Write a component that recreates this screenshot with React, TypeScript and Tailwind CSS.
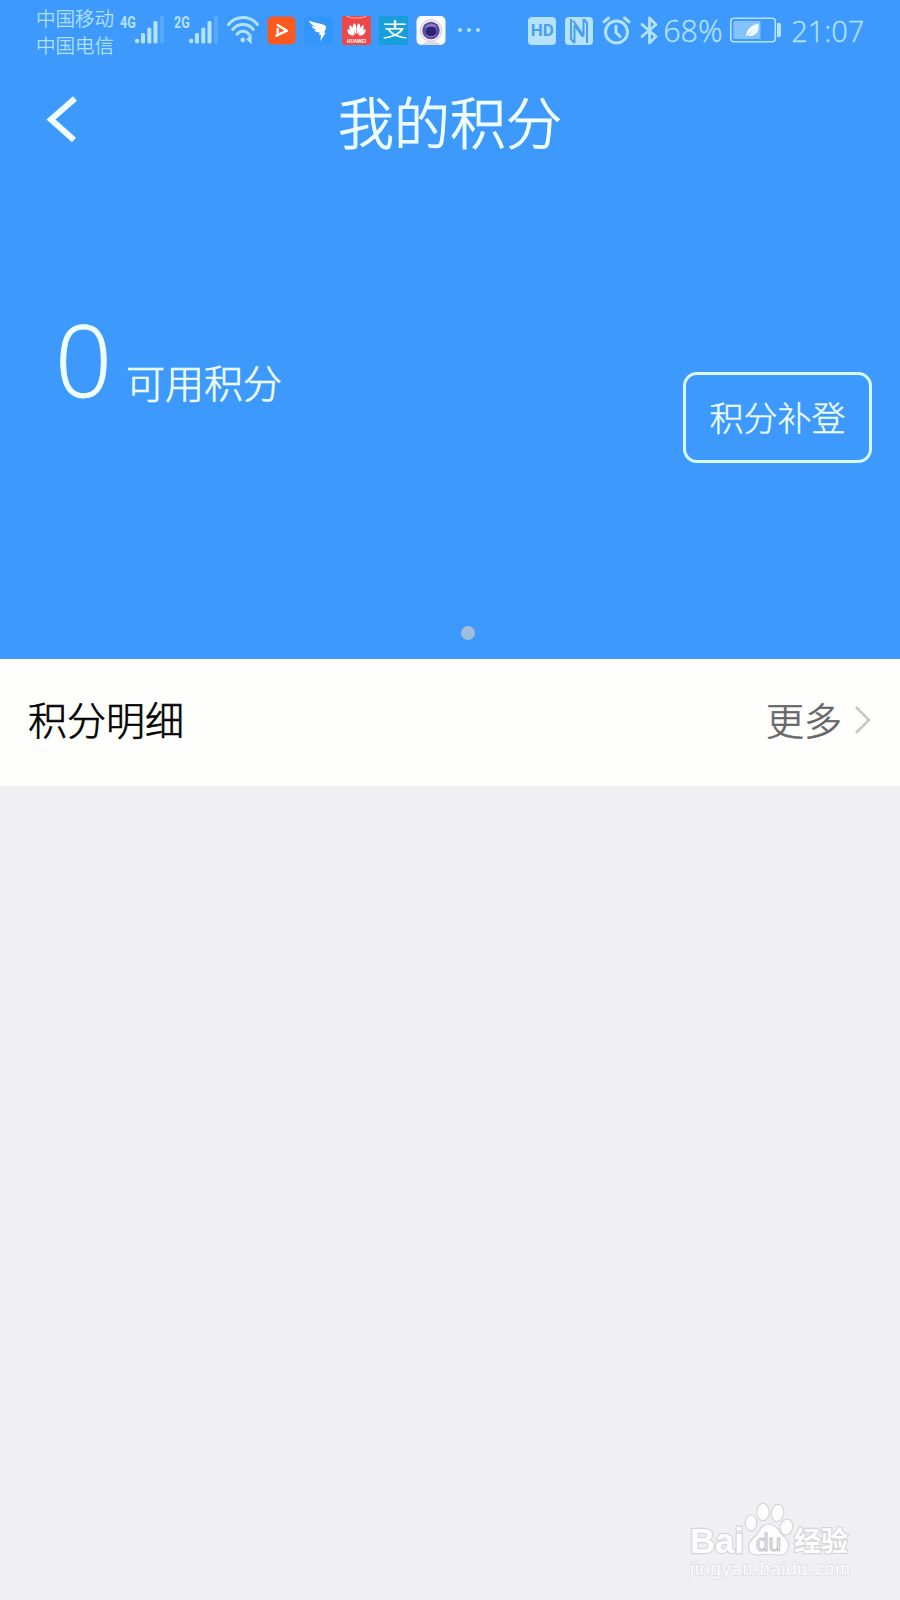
const statusTint = "#b5e2fd";

function SignalBars() {
  return (
    <svg width="30" height="30" viewBox="0 0 30 30" fill={statusTint}>
      <circle cx="2.2" cy="26" r="2.3" />
      <rect x="6" y="18" width="4" height="10.5" rx="1.5" />
      <rect x="12.3" y="12.5" width="4" height="16" rx="1.5" />
      <rect x="18.5" y="6" width="4" height="22.5" rx="1.5" />
      <rect x="25" y="0.5" width="4" height="28" rx="1.5" opacity="0.22" />
    </svg>
  );
}

function Network({ label }: { label: string }) {
  return (
    <div className="flex h-[30px] w-[45px] shrink-0 items-start">
      <span className="w-[15px] origin-left scale-x-[0.74] font-['Roboto'] text-[17px] leading-[15px] font-bold text-[#b5e2fd]">
        {label}
      </span>
      <div className="shrink-0">
        <SignalBars />
      </div>
    </div>
  );
}

function WifiIcon() {
  return (
    <svg width="34" height="30" viewBox="0 0 34 30" fill="none" stroke={statusTint} strokeWidth="2.9" strokeLinecap="round">
      <path d="M2.5 9.5C10 .2 24 .2 31.5 9.5" />
      <path d="M6.7 14.5c5.5-6.6 15.1-6.6 20.6 0" />
      <path d="M11 19.2c3.5-3.9 8.5-3.9 12 0" />
      <circle cx="16.8" cy="25" r="2.4" fill={statusTint} stroke="none" />
      <path d="M21 24.3l4-4.3v8z" fill={statusTint} strokeWidth="1.2" />
    </svg>
  );
}

function AppIcons() {
  return (
    <div className="flex items-center gap-[8.3px] pt-px">
      <svg width="29" height="29" viewBox="0 0 29 29">
        <rect x="0.5" y="0.5" width="28" height="28" rx="5" fill="#fa5a1e" />
        <path d="M10.5 9l9.5 5.7-10.5 5M10.7 13v6" fill="none" stroke="#fff" strokeWidth="2.4" strokeLinejoin="round" strokeLinecap="round" />
      </svg>
      <svg width="29" height="29" viewBox="0 0 29 29">
        <rect width="29" height="29" rx="5" fill="#3296fa" />
        <path d="M5 4.5c4 2 9 2.7 14 4 3 .9 3.500 2.400 2.800 4.300l-1.800 4h1.800l-5.500 8.200 .7-6h-2l.8-2.500c-2.800 .2-4.600-.9-5.700-2.500l3 .2c-2.700-1-4.700-2.300-5.500-4.500l5 1c-3.600-1.300-6.900-2.800-7.600-6.200z" fill="#fff" />
      </svg>
      <svg width="29" height="29" viewBox="0 0 29 29">
        <rect width="29" height="29" rx="2" fill="#eb4949" />
        <path d="M4.5 0c4 2.7 16 2.7 20 0" fill="none" stroke="#f9b3ac" strokeWidth="1" />
        <g fill="#fff">
          <path d="M14 18.5C10.5 13.500 9.500 9 12.600 7.300c2 2 2 7 1.400 11.200z" />
          <path d="M15 18.5c3.500-5 4.500-9.500 1.400-11.200-2 2-2 7-1.400 11.200z" />
          <path d="M12.8 18.8C8.500 16 6.200 12.500 7.800 9c3.200 1.700 4.700 5.800 5 9.800zM16.200 18.800c4.300-2.800 6.600-6.300 5-9.800-3.200 1.700-4.700 5.800-5 9.800z" />
          <path d="M12.2 19.5c-4.500 .6-7.200-2.500-6.700-6.500 3.200 .8 5.400 3.500 6.700 6.500zM16.800 19.500c4.500 .6 7.200-2.500 6.700-6.500-3.200 .8-5.400 3.500-6.700 6.500z" />
        </g>
        <text x="14.5" y="26.6" textAnchor="middle" textLength="19" lengthAdjust="spacingAndGlyphs" fontSize="6" fontWeight="700" fontFamily="Liberation Sans, sans-serif" fill="#fff">
          HUAWEI
        </text>
      </svg>
      <div className="flex size-[29px] items-center justify-center bg-[#169fd8]">
        <span className="translate-x-[2px] scale-x-[1.15] scale-y-[0.9] pb-[4px] text-[22px] leading-[25px] font-normal text-white">支</span>
      </div>
      <svg width="30" height="29" viewBox="0 0 30 29">
        <rect x="0.5" width="29" height="29" rx="5" fill="#fbfafd" />
        <path d="M6 29c1-5 17-5 18 0z" fill="#ded8df" />
        <circle cx="15" cy="14.5" r="10.8" fill="#f3edf5" stroke="#d8c8dc" />
        <circle cx="15" cy="14.5" r="8.7" fill="#5b4aa3" />
        <circle cx="15" cy="15.5" r="5" fill="#2d2470" />
        <path d="M9 12c2.5-5.3 9-5.5 12-.8-4-1-8-.7-12 .8z" fill="#8f7cc6" />
        <path d="M10 19c3 2.2 7 2.2 10 0" stroke="#8e78bd" fill="none" />
      </svg>
    </div>
  );
}

function RightIcons() {
  return (
    <div className="flex items-center pt-px">
      <div className="flex h-[28px] w-[28px] items-center justify-center rounded-[4px] bg-[#b5e2fd] font-['Roboto'] text-[17px] font-bold text-[#4b9fee]">
        HD
      </div>
      <svg className="ml-[9px]" width="28" height="28" viewBox="0 0 28 28">
        <rect width="28" height="28" rx="4" fill={statusTint} />
        <path d="M6 2v20l3.5 4M9.500 26V8.500L18 20M22 26V6l-3.500-4M18.500 2v16.500L8 3.500" fill="none" stroke="#4b9fee" strokeWidth="2" strokeLinejoin="round" />
      </svg>
      <svg className="ml-[9px]" width="29" height="29" viewBox="0 0 29 29" fill="none" stroke={statusTint} strokeWidth="3" strokeLinecap="round">
        <circle cx="14.5" cy="16" r="11" />
        <path d="M14 10v6.5l4 4M2 5.800L6.500 2M27 5.800L22.500 2" />
      </svg>
      <svg className="ml-[9px]" width="19" height="29" viewBox="0 0 19 29" fill="none" stroke={statusTint} strokeWidth="2.8" strokeLinejoin="round" strokeLinecap="round">
        <path d="M2 8.5l14 12L9.500 27V2l6.500 6.500L2 20.500" />
      </svg>
    </div>
  );
}

function BatteryIcon() {
  return (
    <svg width="52" height="26" viewBox="0 0 52 26">
      <rect x="0.8" y="1.2" width="44.5" height="23.5" rx="3" fill="none" stroke={statusTint} strokeWidth="1.6" />
      <rect x="3.5" y="4" width="27" height="18" rx="1" fill="#83c2fb" />
      <path d="M47 6h2.5q1.5 0 1.5 2v10q0 2-1.5 2H47z" fill={statusTint} />
      <path d="M16 20c.2-7 4-11.5 12.5-13.500C30 14 26 20 18 19l5-6.500L16 20z" fill="#effcff" />
    </svg>
  );
}

function StatusBar() {
  return (
    <div className="flex h-[60px] items-center whitespace-nowrap text-[#b5e2fd]">
      <div className="ml-[36px] w-[84px] shrink-0 pt-px text-[19.5px] leading-[27px] font-light [-webkit-text-stroke:0.3px]">
        <div>中国移动</div>
        <div>中国电信</div>
      </div>
      <Network label="4G" />
      <div className="ml-[9px]">
        <Network label="2G" />
      </div>
      <div className="ml-[7px] w-[41px] shrink-0">
        <WifiIcon />
      </div>
      <AppIcons />
      <div className="ml-[12px] flex w-[70px] shrink-0 gap-[5px]">
        <span className="size-[4px] rounded-full bg-[#b5e2fd]" />
        <span className="size-[4px] rounded-full bg-[#b5e2fd]" />
        <span className="size-[4px] rounded-full bg-[#b5e2fd]" />
      </div>
      <RightIcons />
      <span className="ml-[4px] w-[67px] shrink-0 pt-[2px] font-['Open_Sans'] text-[30.5px] font-light [-webkit-text-stroke:0.3px]">68%</span>
      <BatteryIcon />
      <span className="ml-[9px] pt-[2px] font-['Open_Sans'] text-[29px] font-light [-webkit-text-stroke:0.3px]">21:07</span>
    </div>
  );
}

function Watermark() {
  return (
    <div className="absolute top-[1500px] left-[688px] h-[86px] w-[166px]">
      <svg width="166" height="86" viewBox="0 0 166 86" fill="#fdfdfe" stroke="#d6d6da" strokeWidth="1.2">
        <text x="2" y="53" fontSize="35" fontWeight="700" textLength="54" lengthAdjust="spacingAndGlyphs" fontFamily="Liberation Sans, sans-serif" strokeWidth="2.4" paintOrder="stroke">
          Bai
        </text>
        <ellipse cx="63" cy="23" rx="5.8" ry="8" />
        <ellipse cx="75" cy="12" rx="6.2" ry="8.7" />
        <ellipse cx="89.5" cy="13" rx="6.2" ry="8.7" transform="rotate(8 89.5 13)" />
        <ellipse cx="98.5" cy="27" rx="6.2" ry="8" transform="rotate(12 98.5 27)" />
        <path d="M80.5 24c7 0 9 5 13 10 4 4 8 7 7 13-1 6-6 9-11 8-6-1-12-1-18 0-6 1-11-2-11-8 0-6 4-8 8-12 4-5 5-11 12-11z" />
        <text x="68" y="51" fontSize="23" textLength="25" lengthAdjust="spacingAndGlyphs" fontFamily="Liberation Sans, sans-serif" fill="#f1f1f4" stroke="#c9c9ce" strokeWidth="1.2">
          du
        </text>
        <text x="106" y="51" fontSize="27" fontWeight="700" textLength="54" fontFamily="Noto Sans CJK SC, sans-serif" strokeWidth="2.4" paintOrder="stroke">
          经验
        </text>
        <text x="2" y="75" fontSize="18" textLength="160" fontFamily="Liberation Sans, sans-serif" strokeWidth="1.4" stroke="#dcdce0" paintOrder="stroke">
          jingyan.baidu.com
        </text>
      </svg>
    </div>
  );
}

export default function App() {
  return (
    <main className="relative h-[1600px] w-[900px] overflow-hidden bg-[#f0eff4] font-['Noto_Sans_CJK_SC',sans-serif]">
      <section className="flex h-[659px] flex-col bg-[#3d99fb] text-[#f0ffff]">
        <StatusBar />
        <header className="grid h-[118px] grid-cols-[1fr_auto_1fr] items-center">
          <svg className="ml-[46px]" width="34" height="48" viewBox="0 0 34 48" fill="none" stroke="currentColor" strokeWidth="6">
            <path d="M29 3.5L5 24.500L28 45" />
          </svg>
          <h1 className="pt-[2px] text-[56px] leading-[60px] font-light [-webkit-text-stroke:1.1px]">我的积分</h1>
        </header>
        <div className="flex h-[430px] items-start justify-between pr-[28px] pl-[55px]">
          <div className="flex items-baseline pt-[110px]">
            <span className="w-[71px] font-['Open_Sans'] text-[100px] leading-[140px] font-light [-webkit-text-stroke:0.8px]">0</span>
            <span className="relative top-px text-[39px] leading-[48px] font-light [-webkit-text-stroke:0.6px]">可用积分</span>
          </div>
          <button className="mt-[194px] h-[91px] w-[189px] rounded-[14px] border-[3px] border-[#d8fbff] pb-[3px] text-[34px] font-light [-webkit-text-stroke:0.4px]">
            积分补登
          </button>
        </div>
        <div className="flex justify-center pl-[36px]">
          <span className="mt-[18px] size-[14px] rounded-full bg-[#a0bedb]" />
        </div>
      </section>
      <section className="flex h-[127px] items-center justify-between bg-[#fefefd] pr-[28px] pb-[9px] pl-[28px]">
        <h2 className="text-[39px] font-light text-black [-webkit-text-stroke:0.6px]">积分明细</h2>
        <div className="flex items-center text-[38px] font-light text-[#666] [-webkit-text-stroke:0.6px]">
          更多
          <svg className="mt-[3px] ml-[10px]" width="20" height="30" viewBox="0 0 20 30" fill="none" stroke="#c6c6c8" strokeWidth="2.5">
            <path d="M4 2l13 13L4 28" />
          </svg>
        </div>
      </section>
      <Watermark />
    </main>
  );
}
